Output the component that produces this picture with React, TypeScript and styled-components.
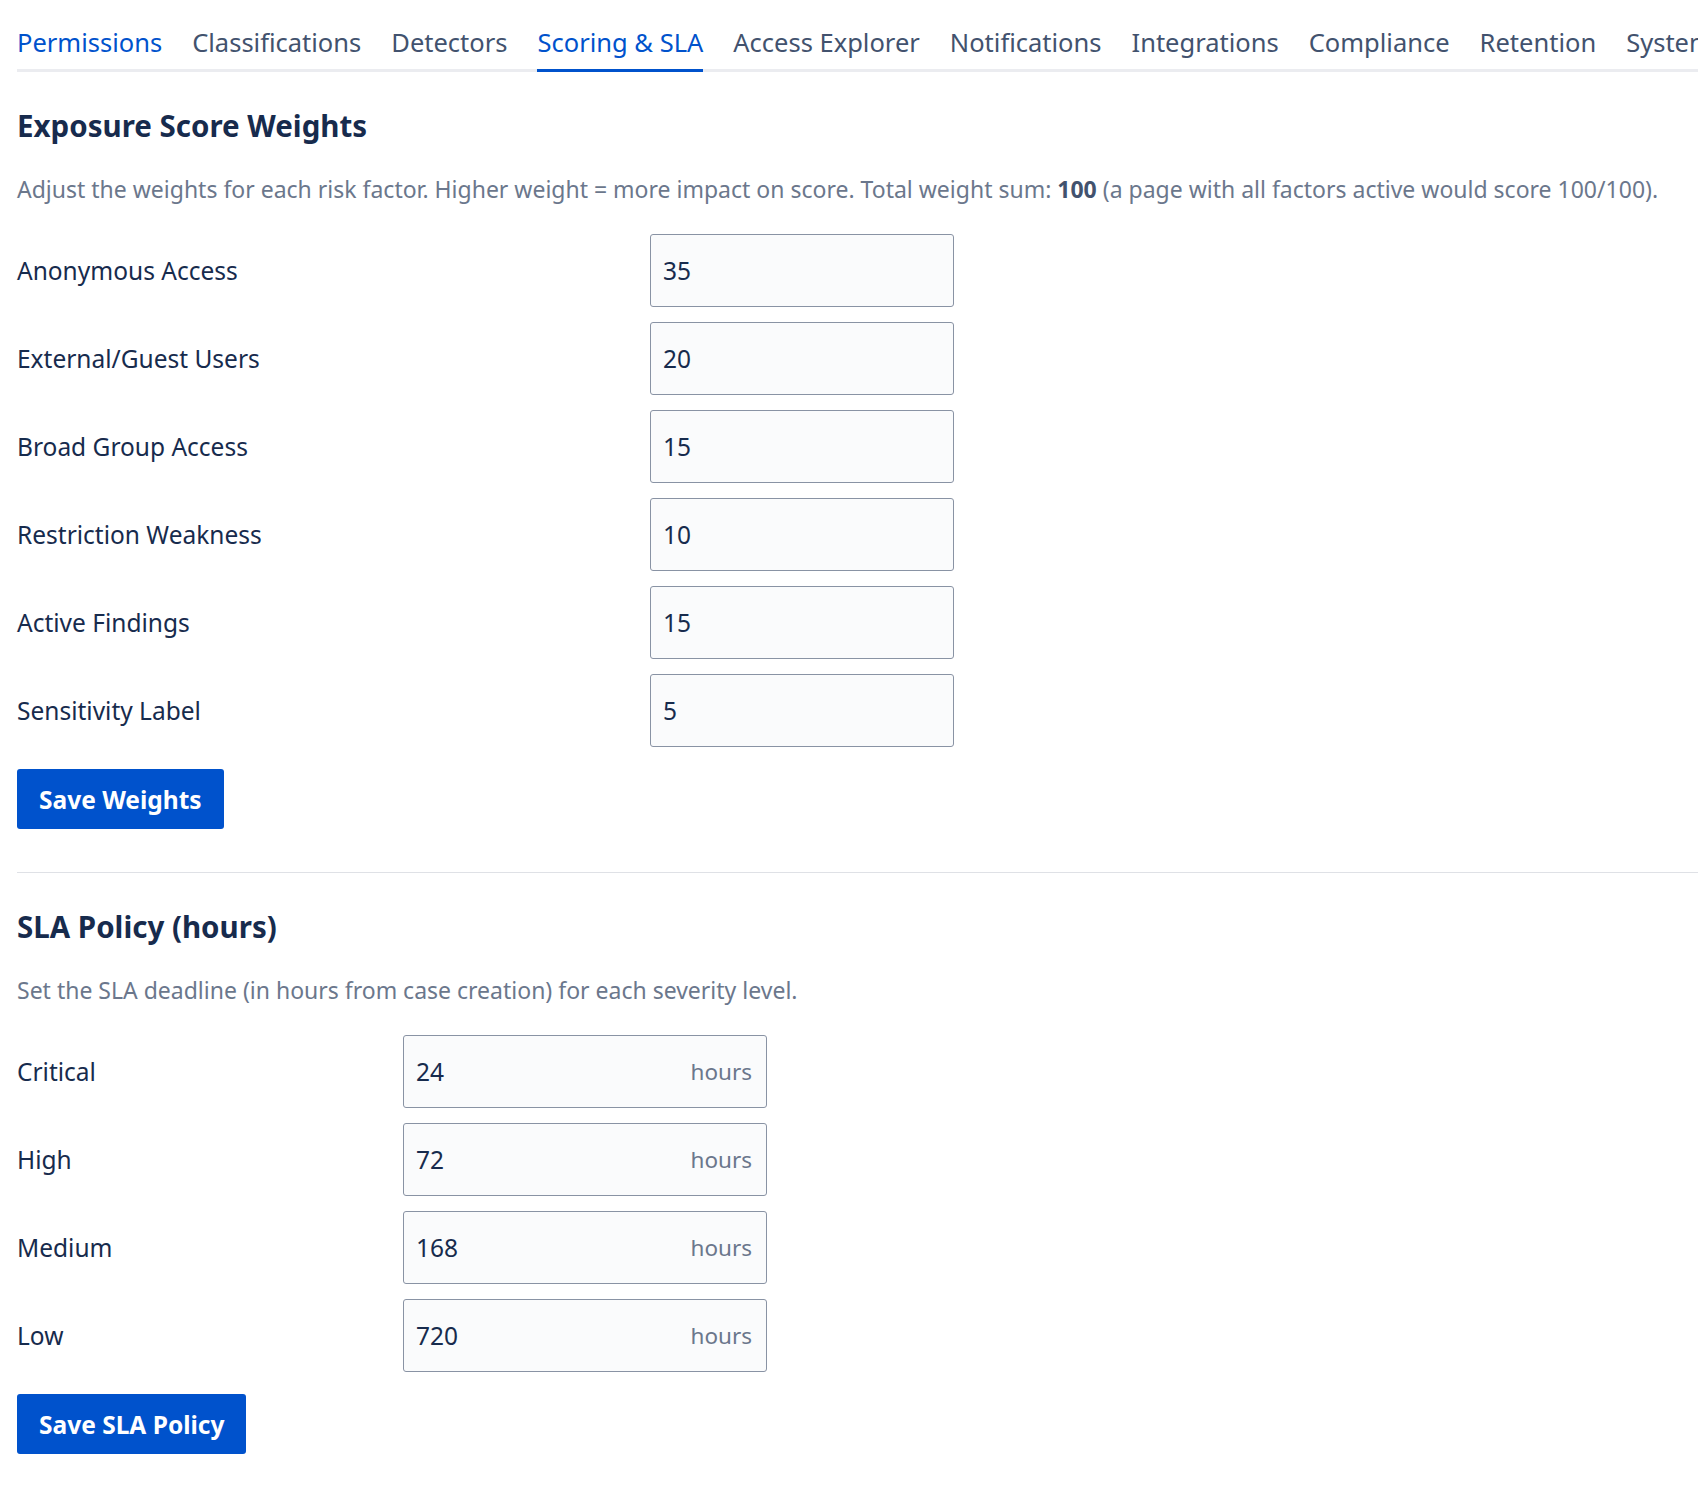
import React from "react";
import styled, { createGlobalStyle } from "styled-components";

const Global = createGlobalStyle`
  body { margin: 0; background: #fff; font-family: "Noto Sans", "Open Sans", sans-serif; color: #172b4d; }
  * { box-sizing: border-box; }
`;

const Page = styled.div`padding: 0 0 40px 17px; overflow: hidden;`;
const Tabs = styled.nav`display: flex; gap: 30px; border-bottom: 3px solid #ebecf0; white-space: nowrap; height: 72px; align-items: flex-end;`;
const Tab = styled.div<{ $active?: boolean }>`
  font-size: 25.5px; color: ${p => p.$active ? "#0052cc" : "#42526e"}; padding-bottom: 10px; margin-bottom: -3px;
  border-bottom: 3px solid ${p => p.$active ? "#0052cc" : "transparent"};
  &:first-child { color: #0052cc; }
`;
const Section = styled.section`padding-right: 0;`;
const H2 = styled.h2`font-size: 29.5px; font-weight: 700; margin: 0; line-height: 40px;`;
const Desc = styled.p`font-size: 23px; color: #6b778c; margin: 28px 0 30px; line-height: 30px; white-space: nowrap;`;
const Rows = styled.div`display: flex; flex-direction: column; gap: 15px;`;
const Row = styled.div<{ $label: number }>`display: grid; grid-template-columns: ${p => p.$label}px auto; align-items: center;`;
const Label = styled.label`font-size: 24.5px; color: #172b4d;`;
const Field = styled.div<{ $w: number }>`
  width: ${p => p.$w}px; height: 73px; border: 1.5px solid #8993a4; border-radius: 3px; background: #fafbfc;
  display: flex; align-items: center; justify-content: space-between; padding: 0 14px 0 12px;
`;
const Value = styled.span`font-size: 24.5px; color: #172b4d;`;
const Suffix = styled.span`font-size: 22.5px; color: #6b778c;`;
const Button = styled.button`
  margin-top: 22px; height: 60px; padding: 0 22px; background: #0052cc; color: #fff; border: none; border-radius: 3px;
  font-family: inherit; font-size: 24.5px; font-weight: 700;
`;
const Divider = styled.hr`border: none; border-top: 1.5px solid #dfe1e6; margin: 43px 0 34px;`;

const weights = [["Anonymous Access", "35"], ["External/Guest Users", "20"], ["Broad Group Access", "15"], ["Restriction Weakness", "10"], ["Active Findings", "15"], ["Sensitivity Label", "5"]];
const sla = [["Critical", "24"], ["High", "72"], ["Medium", "168"], ["Low", "720"]];
const tabs = ["Permissions", "Classifications", "Detectors", "Scoring & SLA", "Access Explorer", "Notifications", "Integrations", "Compliance", "Retention", "System"];

export default function App() {
  return (
    <Page>
      <Global />
      <Tabs>{tabs.map(t => <Tab key={t} $active={t === "Scoring & SLA"}>{t}</Tab>)}</Tabs>
      <Section style={{ paddingTop: 34 }}>
        <H2>Exposure Score Weights</H2>
        <Desc>Adjust the weights for each risk factor. Higher weight = more impact on score. Total weight sum: <b style={{ color: "#42526e" }}>100</b> (a page with all factors active would score 100/100).</Desc>
        <Rows>{weights.map(([l, v]) => <Row key={l} $label={633}><Label>{l}</Label><Field $w={304}><Value>{v}</Value></Field></Row>)}</Rows>
        <Button>Save Weights</Button>
        <Divider />
        <H2>SLA Policy (hours)</H2>
        <Desc>Set the SLA deadline (in hours from case creation) for each severity level.</Desc>
        <Rows>{sla.map(([l, v]) => <Row key={l} $label={386}><Label>{l}</Label><Field $w={364}><Value>{v}</Value><Suffix>hours</Suffix></Field></Row>)}</Rows>
        <Button>Save SLA Policy</Button>
      </Section>
    </Page>
  );
}
